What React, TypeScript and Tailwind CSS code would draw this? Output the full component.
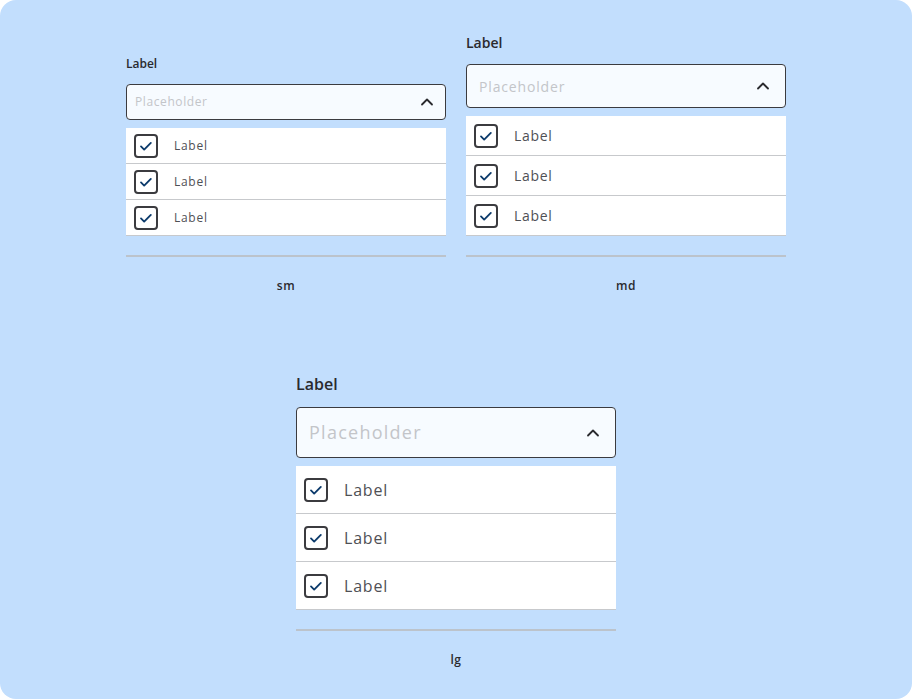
import { ChevronUp } from "lucide-react";

type Size = "sm" | "md" | "lg";

const styles: Record<
  Size,
  { label: string; gap: string; select: string; placeholder: string; row: string; item: string }
> = {
  sm: {
    label: "text-[12px] leading-4",
    gap: "mt-3",
    select: "h-9 px-2",
    placeholder: "text-[12px] tracking-[0.05em]",
    row: "h-9",
    item: "text-[12px] tracking-[0.06em]",
  },
  md: {
    label: "text-[14px] leading-5",
    gap: "mt-[11px]",
    select: "h-11 px-3",
    placeholder: "text-[14px] tracking-[0.06em]",
    row: "h-10",
    item: "text-[14px] tracking-[0.05em]",
  },
  lg: {
    label: "text-[16px] leading-6",
    gap: "mt-[11px]",
    select: "h-[51px] px-3",
    placeholder: "text-[18px] tracking-[0.07em]",
    row: "h-12",
    item: "text-[16px] tracking-[0.05em]",
  },
};

function Checkbox() {
  return (
    <span className="flex h-6 w-6 shrink-0 items-center justify-center rounded-[4px] border-2 border-[#3b3b3f] bg-white">
      <svg viewBox="0 0 24 24" className="h-5 w-5" fill="none">
        <path
          d="M6 12.5l3.8 3.8 8-8"
          stroke="#0b3a6b"
          strokeWidth="2.2"
          strokeLinecap="round"
          strokeLinejoin="round"
        />
      </svg>
    </span>
  );
}

function MultiSelect({ size }: { size: Size }) {
  const s = styles[size];
  return (
    <div className="flex w-[320px] flex-col">
      <div className={`font-semibold text-[#2a2a2e] ${s.label}`}>Label</div>
      <div
        className={`${s.gap} flex items-center justify-between rounded-[4px] border border-[#3b3b3f] bg-[#f7fbff] ${s.select}`}
      >
        <span className={`text-[#c3c5c9] ${s.placeholder}`}>Placeholder</span>
        <ChevronUp className="h-5 w-5 text-[#2a2a2e]" strokeWidth={2.2} />
      </div>
      <div className="mt-2 flex flex-col bg-white">
        {[0, 1, 2].map((i) => (
          <div
            key={i}
            className={`flex items-center gap-4 border-b border-[#c7c9cc] px-2 ${s.row}`}
          >
            <Checkbox />
            <span className={`text-[#4f5055] ${s.item}`}>Label</span>
          </div>
        ))}
      </div>
      <div className="mt-[19px] h-[2px] bg-[#bcc3cb]" />
      <div className="mt-5 text-center text-[12px] font-semibold tracking-[0.04em] text-[#2a2a2e]">
        {size}
      </div>
    </div>
  );
}

export default function App() {
  return (
    <div className="bg-white">
      <div
        className="flex h-[699px] w-[912px] flex-col items-center rounded-[16px] bg-[#c2defd] pt-[33px]"
        style={{ fontFamily: "'Open Sans', sans-serif" }}
      >
        <div className="flex items-end gap-5">
          <MultiSelect size="sm" />
          <MultiSelect size="md" />
        </div>
        <div className="mt-[77px]">
          <MultiSelect size="lg" />
        </div>
      </div>
    </div>
  );
}
